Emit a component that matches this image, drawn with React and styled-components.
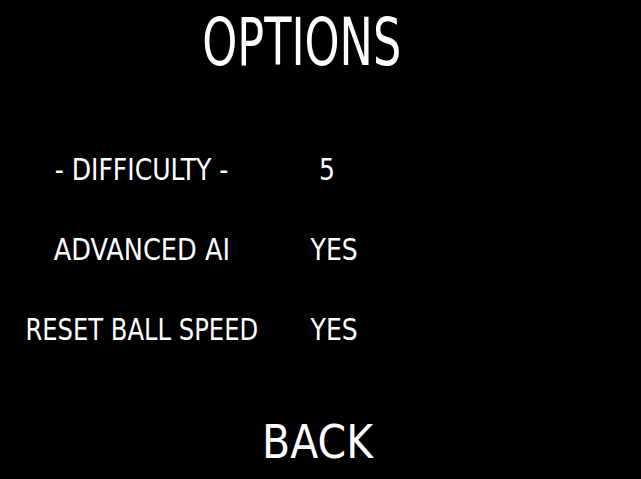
import React from 'react';
import styled, { createGlobalStyle } from 'styled-components';

const GlobalStyle = createGlobalStyle`
  html, body {
    margin: 0;
    padding: 0;
    background: #000;
  }
`;

const FONT = `"DejaVu Sans Condensed", "DejaVu Sans", sans-serif`;

const Screen = styled.div`
  width: 641px;
  height: 479px;
  background: #000;
  color: #fff;
  font-family: ${FONT};
  display: flex;
  flex-direction: column;
  overflow: hidden;
`;

const Title = styled.h1`
  margin: 0;
  padding: 10px 50px 0 0;
  font-size: 66px;
  line-height: 66px;
  font-weight: normal;
  text-align: center;
  transform: scaleX(0.75);
`;

const OptionsGrid = styled.div`
  margin-top: 78px;
  display: grid;
  grid-template-columns: 284px 100px;
  grid-auto-rows: 31px;
  row-gap: 49px;
  justify-items: center;
`;

const Label = styled.div`
  font-size: 31px;
  line-height: 31px;
  white-space: nowrap;
  transform: scaleX(${(p) => p.$squeeze || 0.88});
`;

const Value = styled.div`
  font-size: 31px;
  line-height: 31px;
  white-space: nowrap;
  margin-right: ${(p) => p.$nudge || 0}px;
  transform: scaleX(0.9);
`;

const Back = styled.div`
  margin-top: 73px;
  padding-right: 6px;
  font-size: 47px;
  line-height: 47px;
  text-align: center;
  transform: scaleX(0.97);
`;

const options = [
  { label: '- DIFFICULTY -', value: '5', nudge: 14, squeeze: 0.9 },
  { label: 'ADVANCED AI', value: 'YES', squeeze: 0.92 },
  { label: 'RESET BALL SPEED', value: 'YES', squeeze: 0.87 },
];

export default function App() {
  return (
    <>
      <GlobalStyle />
      <Screen>
        <Title>OPTIONS</Title>
        <OptionsGrid>
          {options.map((o) => (
            <React.Fragment key={o.label}>
              <Label $squeeze={o.squeeze}>{o.label}</Label>
              <Value $nudge={o.nudge}>{o.value}</Value>
            </React.Fragment>
          ))}
        </OptionsGrid>
        <Back>BACK</Back>
      </Screen>
    </>
  );
}
